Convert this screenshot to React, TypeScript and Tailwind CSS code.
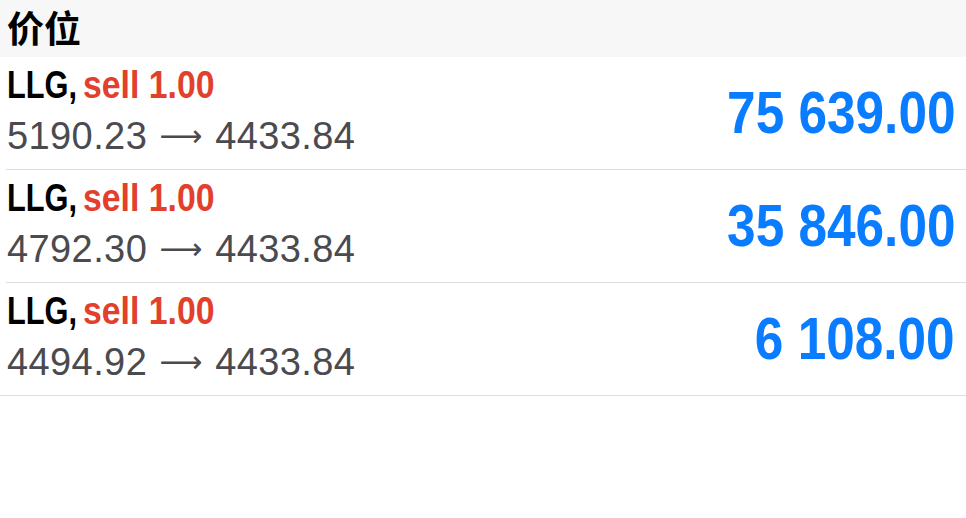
const rows = [
  { from: "5190.23", to: "4433.84", total: "75 639.00" },
  { from: "4792.30", to: "4433.84", total: "35 846.00" },
  { from: "4494.92", to: "4433.84", total: "6 108.00" },
];

export default function App() {
  return (
    <div className="w-[966px] h-[518px] bg-white font-['Liberation_Sans',sans-serif]">
      {/* section header */}
      <div className="h-[57px] bg-[#f7f7f7] pl-[7px]">
        <h1 className="text-[37px] font-bold text-black font-['Noto_Sans_CJK_SC',sans-serif] leading-[54px]">
          价位
        </h1>
      </div>
      <div className="border-b border-[#dedede]">
        {rows.map((r, i) => (
          <div key={i} className={i > 0 ? "pl-[6px]" : ""}>
            <div className={i > 0 ? "border-t border-[#dedede]" : ""}>
              <div
                className={`h-[112px] flex items-center justify-between pr-[11px] ${
                  i > 0 ? "pl-[1px]" : "pl-[7px]"
                }`}
              >
                <div className="flex flex-col pb-[6px]">
                  <p className="h-[44px] text-[38px] leading-[44px] font-bold whitespace-nowrap flex">
                    <span className="inline-block w-[70px]">
                      <span className="inline-block origin-left scale-x-[0.81] text-black">LLG,</span>
                    </span>
                    <span className="inline-block w-[132px] ml-[6px]">
                      <span className="inline-block origin-left scale-x-[0.89] text-[#e2402c]">
                        sell 1.00
                      </span>
                    </span>
                  </p>
                  <p className="mt-[7px] h-[44px] text-[38px] leading-[44px] tracking-[0.4px] text-[#4a4a4f] whitespace-nowrap flex items-center">
                    <span>{r.from}</span>
                    <span className="ml-[12px] mr-[13px] font-['DejaVu_Sans',sans-serif] text-[30px] tracking-normal">
                      ⟶
                    </span>
                    <span>{r.to}</span>
                  </p>
                </div>
                <p className="text-[59px] font-bold text-[#0a7cff] leading-none whitespace-nowrap">
                  <span className="inline-block origin-right scale-x-[0.87]">{r.total}</span>
                </p>
              </div>
            </div>
          </div>
        ))}
      </div>
    </div>
  );
}
